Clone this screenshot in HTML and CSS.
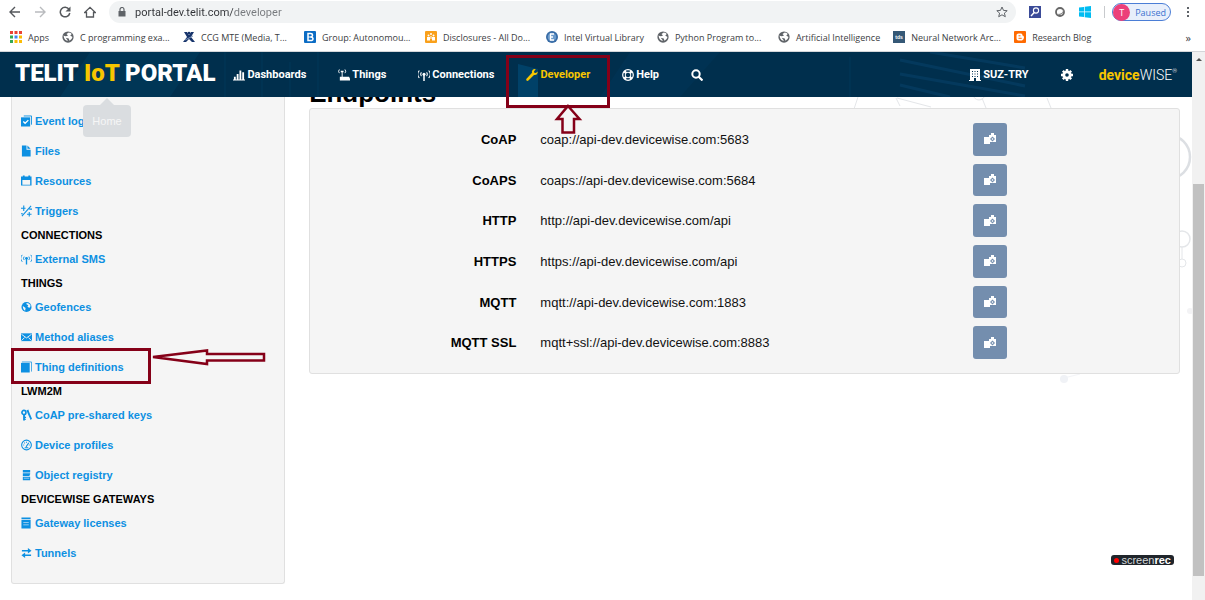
FILE: index.html
```html
<!DOCTYPE html>
<html lang="en">
<head>
<meta charset="utf-8">
<title>Telit IoT Portal - Developer</title>
<link rel="stylesheet" href="styles.css">
</head>
<body>
<svg class="defs" aria-hidden="true">
  <symbol id="globe" viewBox="0 0 16 16"><circle cx="8" cy="8" r="7.5" fill="#5f6368"/><path d="M2 6 Q5 8 8 6 L6 4 L9 2 Q12 2 13 4 L11 6 L14 8 Q13 12 10 13 L9 10 L5 9 L8 13 Q3 13 2 6Z" fill="#fff"/></symbol>
  <symbol id="signal" viewBox="1 -1 16 16"><path d="M5.6 3.5a4 4 0 0 0 0 5M12.4 3.5a4 4 0 0 1 0 5M2.8 1a7.5 7.5 0 0 0 0 10M15.2 1a7.5 7.5 0 0 1 0 10" fill="none" stroke="currentColor" stroke-width="1.4"/><circle cx="9" cy="6" r="2" fill="currentColor"/><path d="M8 6h2v9H8z" fill="currentColor"/></symbol>
  <symbol id="copy" viewBox="0 0 14 14"><path d="M1 5h6v7H1zM6 3h2V1h3v2h2v7H7V5H6z" fill="#fff"/><path d="M9.500 4.500L12 7 9.500 9.500 7 7z" fill="#748eae"/><path d="M9.500 6l1 1-1 1-1-1z" fill="#fff"/></symbol>
</svg>

<header class="browser">
  <div class="toolbar">
    <button class="tool" aria-label="Back"><svg viewBox="0 0 12 12"><path d="M11 6H1.500M6 1L1 6l5 5" fill="none" stroke="#55585c" stroke-width="1.4"/></svg></button>
    <button class="tool" aria-label="Forward"><svg viewBox="0 0 12 12"><path d="M1 6h9.500M6 1l5 5-5 5" fill="none" stroke="#b9bbbe" stroke-width="1.4"/></svg></button>
    <button class="tool" aria-label="Reload"><svg viewBox="0 0 12 12"><path d="M10 3.200A4.800 4.800 0 1 0 10.800 7" fill="none" stroke="#55585c" stroke-width="1.500"/><path d="M11.500 0.500v5h-5z" fill="#55585c"/></svg></button>
    <button class="tool" aria-label="Home"><svg viewBox="0 0 12 12"><path d="M0.700 6.500L6 1.300l5.300 5.200H9.500V11h-7V6.500z" fill="none" stroke="#55585c" stroke-width="1.300"/></svg></button>
    <div class="omnibox">
      <svg class="lock" viewBox="0 0 8 10"><path d="M0.500 4h7v5.500h-7z" fill="#5f6368"/><path d="M2 4V2.500a2 2 0 0 1 4 0V4" fill="none" stroke="#5f6368" stroke-width="1.200"/></svg>
      <input class="address" type="text" aria-label="Address" value="portal-dev.telit.com/developer">
      <button class="tool" aria-label="Bookmark this page"><svg viewBox="0 0 12 12"><path d="M6 1l1.500 3.400 3.700.300-2.800 2.400.900 3.600L6 8.800l-3.300 1.900.900-3.600L.800 4.700l3.700-.300z" fill="none" stroke="#5f6368"/></svg></button>
    </div>
    <button class="tool" aria-label="Search extension"><svg viewBox="0 0 12 12"><path d="M0 0h12v12H0z" fill="#3b4b98"/><circle cx="7" cy="4.500" r="2.600" fill="none" stroke="#fff" stroke-width="1.100"/><path d="M5.200 6.500L2 10" stroke="#fff" stroke-width="1.400"/></svg></button>
    <button class="tool" aria-label="Sphere extension"><svg viewBox="0 0 12 12"><circle cx="6" cy="6" r="4" fill="#fff" stroke="#666" stroke-width="1.800"/><path d="M3 8a4 4 0 0 0 6-5q1 5-6 5z" fill="#888"/></svg></button>
    <button class="tool" aria-label="Windows extension"><svg viewBox="0 0 12 12"><path d="M0 1.500l5-.600v4.700H0zM5.700.800L12 0v5.600H5.700zM0 6.300h5v4.800l-5-.600zM5.700 6.300H12V12l-6.300-.800z" fill="#00bcf2"/></svg></button>
    <span class="divider"></span>
    <button class="profile"><span class="avatar">T</span>Paused</button>
    <button class="tool menu" aria-label="Menu"><svg viewBox="0 0 12 12"><path d="M5 1h2v2H5zM5 5h2v2H5zM5 9h2v2H5z" fill="#5f6368"/></svg></button>
  </div>
  <nav class="bookmarks" aria-label="Bookmarks">
    <a href="#"><svg viewBox="0 0 12 12"><path d="M0 0h3v3H0zM4.500 0h3v3h-3zM9 0h3v3H9z" fill="#ea4335"/><path d="M0 4.500h3v3H0z" fill="#34a853"/><path d="M4.500 4.500h3v3h-3z" fill="#4285f4"/><path d="M9 4.500h3v3H9zM4.500 9h3v3h-3zM9 9h3v3H9z" fill="#fbbc05"/><path d="M0 9h3v3H0z" fill="#34a853"/></svg><span>Apps</span></a>
    <a href="#" class="cut"><svg><use href="#globe"/></svg><span>C programming exa...</span></a>
    <a href="#" class="cut"><svg viewBox="0 0 12 12"><path d="M1 1l3 0 2 3 2-3h3L8 6l4 5H9L6 8l-3 3H0l4-5z" fill="#17346b"/><circle cx="6" cy="2" r="1.300" fill="#17346b"/><path d="M2 9l8-4" stroke="#7d95b8"/></svg><span>CCG MTE (Media, T...</span></a>
    <a href="#" class="cut"><svg viewBox="0 0 12 12"><rect width="12" height="12" rx="1" fill="#0b6cc4"/><path d="M4 2.500h2.500q2 0 2 1.700T6.500 6q2.500 0 2.500 1.800T6.500 9.500H4z" fill="none" stroke="#fff" stroke-width="1.500"/><path d="M4 6h3" stroke="#fff"/></svg><span>Group: Autonomou...</span></a>
    <a href="#" class="cut"><svg viewBox="0 0 12 12"><rect width="12" height="12" rx="1" fill="#f9a01b"/><g fill="#fff"><circle cx="3.500" cy="4.500" r="1"/><circle cx="8.500" cy="4.500" r="1"/><circle cx="6" cy="3" r="1"/><path d="M2 6h3v3.500H2zM7 6h3v3.500H7zM5.500 5h1v3h-1z"/></g></svg><span>Disclosures - All Do...</span></a>
    <a href="#"><svg viewBox="0 0 12 12"><circle cx="6" cy="6" r="6" fill="#376ba5"/><circle cx="6" cy="6" r="4.300" fill="#6c9bcb"/><path d="M8 3H4.500v6H8M4.500 6H7" fill="none" stroke="#fff" stroke-width="1.300"/></svg><span>Intel Virtual Library</span></a>
    <a href="#" class="cut"><svg><use href="#globe"/></svg><span>Python Program to...</span></a>
    <a href="#"><svg><use href="#globe"/></svg><span>Artificial Intelligence</span></a>
    <a href="#" class="cut"><svg viewBox="0 0 12 12"><path d="M0 0h12v12H0z" fill="#355876"/><text x="6" y="8" text-anchor="middle" class="tds">tds</text></svg><span>Neural Network Arc...</span></a>
    <a href="#"><svg viewBox="0 0 12 12"><rect width="12" height="12" rx="1" fill="#ff6a00"/><path d="M4.500 2.500H7q1.500 0 1.500 2 1.500 0 1.500 2T8 9.500H4.500q-2 0-2-2v-3q0-2 2-2z" fill="#fff"/><path d="M4.500 4.800h2M4.500 7.300h3.200" stroke="#ff6a00"/></svg><span>Research Blog</span></a>
    <button class="more" aria-label="More bookmarks">»</button>
  </nav>
</header>

<div class="viewport">
  <div class="page">
    <header class="topbar">
      <svg class="texture" viewBox="0 0 1192 45" preserveAspectRatio="none" aria-hidden="true">
        <path d="M90 0h110l-30 45H60z" fill="#004a75" opacity=".25"/>
        <path d="M518 12l20 5v28h-20z" fill="#00507f" opacity=".55"/>
        <path d="M600 45l30-45h90l-40 45z" fill="#004a75" opacity=".14"/>
        <path d="M900 8l125 26M900 22l125 22M930 0l95 16M900 33l50 12" stroke="#0a4a75" stroke-width="3" opacity=".4"/>
        <path d="M225 0v45M262 0v45M290 10v35M318 0v45M850 5v40" stroke="#004a75" opacity=".3"/>
      </svg>
      <a href="#" class="brand">TELIT <b>IoT</b> PORTAL</a>
      <nav class="mainnav" aria-label="Main">
        <a href="#"><svg viewBox="0 0 13 12"><path d="M0 11h13v1H0zM1 8h2v3H1zM4 5h2v6H4zM7 1h2v10H7zM10 3h2v8h-2z" fill="currentColor"/></svg>Dashboards</a>
        <a href="#"><svg viewBox="0 0 13 12"><path d="M1.500 0a3 3 0 0 0 0 4M7.500 0a3 3 0 0 1 0 4" fill="none" stroke="currentColor"/><path d="M4 2h1v6H4zM3 1.500h3v1.500H3zM2 8h10l1 2v2H2z" fill="currentColor"/></svg>Things</a>
        <a href="#"><svg><use href="#signal"/></svg>Connections</a>
        <a href="#" class="active"><svg viewBox="0 0 12 12"><path d="M11.800 2.500L9.800 4 8.300 3.800 8 2.200 9.800.300Q7 -.500 6 2q-.300 1 .100 1.800L.500 9.800q-.800 1.400.600 2 .800.300 1.300-.300L8 6Q11.500 6.500 11.800 2.500z" fill="currentColor"/></svg>Developer</a>
        <a href="#"><svg viewBox="0 0 12 12"><circle cx="6" cy="6" r="5.300" fill="none" stroke="currentColor" stroke-width="1.200"/><circle cx="6" cy="6" r="2.800" fill="none" stroke="currentColor"/><path d="M2.200 2.200l2 2M9.800 2.200l-2 2M2.200 9.800l2-2M9.800 9.800l-2-2" stroke="currentColor" stroke-width="2.400"/></svg>Help</a>
        <a href="#" aria-label="Search"><svg viewBox="0 0 12 12"><circle cx="5" cy="5" r="3.700" fill="none" stroke="currentColor" stroke-width="2"/><path d="M7.500 7.500l4 4" stroke="currentColor" stroke-width="2.200"/></svg></a>
      </nav>
      <nav class="account" aria-label="Account">
        <a href="#"><svg viewBox="0 0 12 12"><path fill-rule="evenodd" d="M1 0h10v11h1v1H7V9H5v3H0v-1h1zM3 2v1h1V2zM5.500 2v1h1V2zM8 2v1h1V2zM3 4.500v1h1v-1zM5.500 4.500v1h1v-1zM8 4.500v1h1v-1zM3 7v1h1V7zM5.500 7v1h1V7zM8 7v1h1V7z" fill="currentColor"/></svg>SUZ-TRY</a>
        <a href="#" aria-label="Settings"><svg viewBox="0 0 12 12"><circle cx="6" cy="6" r="3.200" fill="none" stroke="currentColor" stroke-width="2.800"/><path d="M6 0v2M6 10v2M0 6h2M10 6h2M1.800 1.800l1.400 1.400M8.800 8.800l1.400 1.400M1.800 10.200l1.400-1.400M8.800 3.200l1.400-1.400" stroke="currentColor" stroke-width="2.400"/></svg></a>
        <a href="#" class="dw"><b>device</b>WISE<sup>®</sup></a>
      </nav>
    </header>

    <div class="content">
      <svg class="network" viewBox="0 0 360 300" aria-hidden="true">
        <g fill="none" stroke="#e4e6e9"><path d="M26 0l-4 12M65 1l34 9M150 1l4 10M215 1l4 10M64 1l4 8" /><circle cx="147" cy="-3" r="6"/><circle cx="336" cy="60" r="22" stroke="#dcdfe3" stroke-width="2.500"/><circle cx="350" cy="142" r="8" stroke-width="1.500"/><circle cx="350" cy="166" r="4"/><path d="M350 150v12M347 130v4"/><path d="M232 281l16-4" stroke="#f3f4f7"/></g>
        <circle cx="232" cy="282" r="4" fill="#f0f2f6"/><circle cx="358" cy="214" r="3" fill="#f3f3f5"/>
      </svg>
      <aside class="sidebar">
        <a href="#"><svg viewBox="0 0 12 12"><path d="M3 .500h8.500V10" fill="none" stroke="currentColor"/><path d="M0 2h10v10H0z" fill="currentColor"/><path d="M2.500 6.500l2 2 3.500-3.500" fill="none" stroke="#fff" stroke-width="1.400"/></svg>Event log</a>
        <a href="#"><svg viewBox="0 0 12 12"><path d="M1 0h5v4.500h4.500V12H1zM7 0l3.500 3.500H7z" fill="currentColor"/></svg>Files</a>
        <a href="#"><svg viewBox="0 0 12 12"><path fill-rule="evenodd" d="M0 1h2V0h2v1h4V0h2v1h1.500v10H0zM1.500 5v5H10V5z" fill="currentColor"/></svg>Resources</a>
        <a href="#"><svg viewBox="0 0 12 12"><path d="M1 11.500L11 .500M3 0v6M0 3h5M9 7v5M6.500 9.500h5M9 4h3M0 9h2" fill="none" stroke="currentColor" stroke-width="1.200"/></svg>Triggers</a>
        <h2>CONNECTIONS</h2>
        <a href="#"><svg><use href="#signal"/></svg>External SMS</a>
        <h2>THINGS</h2>
        <a href="#"><svg viewBox="0 0 12 12"><circle cx="6" cy="6" r="5.500" fill="currentColor"/><path d="M6 1.500Q10 2 10.500 5L9 7 7 5.500 8 4 6 3zM2 5l3 2-.500 3Q2 9 2 5z" fill="#f5f5f5"/></svg>Geofences</a>
        <a href="#"><svg viewBox="0 0 12 12"><path d="M0 2h12v8.500H0z" fill="currentColor"/><path d="M.500 3L6 7l5.500-4M.500 10L4 6.500M11.500 10L8 6.500" fill="none" stroke="#f5f5f5"/></svg>Method aliases</a>
        <a href="#"><svg viewBox="0 0 12 12"><path d="M0 1.500h9.500V12H0z" fill="currentColor"/><path d="M1 .500h10.500V11" fill="none" stroke="currentColor" stroke-width=".8"/></svg>Thing definitions</a>
        <h2>LWM2M</h2>
        <a href="#"><svg viewBox="0 0 12 12"><circle cx="3.200" cy="3.200" r="2.200" fill="none" stroke="currentColor" stroke-width="1.800"/><path d="M2.300 5h2v7h-2zM4 8h1.500v1.200H4zM4 10h1.500v1.200H4zM6 1l2-1 1 3 3 7-1.500 1.500L8 6z" fill="currentColor"/></svg>CoAP pre-shared keys</a>
        <a href="#"><svg viewBox="0 0 12 12"><circle cx="6" cy="6" r="5.300" fill="none" stroke="currentColor" stroke-width="1.200"/><path d="M5.500 8L8.500 3.500M2.500 6h1M3.500 3.500l.700.700M6 2.500v1M8.500 6h1M4 9h4" stroke="currentColor" stroke-width="1.200"/></svg>Device profiles</a>
        <a href="#"><svg viewBox="0 0 12 12"><path d="M2 .500h8v2.800H2zM2 4.200h8v1L9 6.500 10 7H2zM2 8h8v3.800H2z" fill="currentColor"/><path d="M3 9.500h6" stroke="#9fd0f2"/></svg>Object registry</a>
        <h2>DEVICEWISE GATEWAYS</h2>
        <a href="#"><svg viewBox="0 0 12 12"><path d="M.500 0h10v1.500h-10zM.500 2.500h10V12h-10z" fill="currentColor"/><path d="M2.500 5.500h6M2.500 8h6" stroke="#9fd0f2"/></svg>Gateway licenses</a>
        <a href="#"><svg viewBox="0 0 12 12"><path d="M1 3.500h7M4 8.500h7" stroke="currentColor" stroke-width="1.600"/><path d="M7.500 .500L11.500 3.500l-4 3zM4.500 5.500L.500 8.500l4 3z" fill="currentColor"/></svg>Tunnels</a>
      </aside>
      <main class="endpoints">
        <h1>Endpoints</h1>
        <section class="panel">
          <div class="row"><strong>CoAP</strong><span>coap://api-dev.devicewise.com:5683</span><button aria-label="Copy CoAP"><svg><use href="#copy"/></svg></button></div>
          <div class="row"><strong>CoAPS</strong><span>coaps://api-dev.devicewise.com:5684</span><button aria-label="Copy CoAPS"><svg><use href="#copy"/></svg></button></div>
          <div class="row"><strong>HTTP</strong><span>http://api-dev.devicewise.com/api</span><button aria-label="Copy HTTP"><svg><use href="#copy"/></svg></button></div>
          <div class="row"><strong>HTTPS</strong><span>https://api-dev.devicewise.com/api</span><button aria-label="Copy HTTPS"><svg><use href="#copy"/></svg></button></div>
          <div class="row"><strong>MQTT</strong><span>mqtt://api-dev.devicewise.com:1883</span><button aria-label="Copy MQTT"><svg><use href="#copy"/></svg></button></div>
          <div class="row"><strong>MQTT SSL</strong><span>mqtt+ssl://api-dev.devicewise.com:8883</span><button aria-label="Copy MQTT SSL"><svg><use href="#copy"/></svg></button></div>
        </section>
      </main>
      <div class="tooltip" role="tooltip">Home</div>
      <div class="screenrec"><i></i><span>screen<b>rec</b></span></div>
    </div>
  </div>
  <div class="scrollbar" aria-hidden="true"><span class="up"></span><span class="thumb"></span></div>
</div>

<svg class="marks" width="1205" height="600" aria-hidden="true">
  <g fill="none" stroke="#850018" stroke-width="3">
    <path d="M507.500 56.500h101v50h-101z"/>
    <path d="M12.500 349.500h137v33h-137z"/>
    <path d="M568 106l11.500 13H574v13.500h-11.500V119H557z" stroke-width="2.500"/>
    <path d="M153 357l54-6.500v3.500h57v6.500h-57v3.500z" stroke-width="2.500"/>
  </g>
</svg>
</body>
</html>
```
FILE: styles.css
```css
* { box-sizing: border-box; }
body {
  margin: 0;
  height: 100vh;
  display: flex;
  flex-direction: column;
  overflow: hidden;
  position: relative;
  background: #fff;
  font-family: "Liberation Sans", Arial, sans-serif;
}
a { text-decoration: none; color: inherit; }
button { border: 0; padding: 0; background: none; font: inherit; color: inherit; }
svg { display: block; flex: none; }
.defs { position: absolute; width: 0; height: 0; }

/* browser chrome */
.browser { border-bottom: 1px solid #d4d6d9; font-family: "Open Sans", "Noto Sans", sans-serif; }
.toolbar { display: flex; align-items: center; gap: 13px; height: 24px; padding: 0 11px 0 9px; }
.tool svg { width: 12px; height: 12px; }
.omnibox {
  flex: 1;
  display: flex;
  align-items: center;
  gap: 9px;
  height: 22px;
  padding: 0 8px 0 9px;
  border-radius: 11px;
  background: #f1f3f4;
}
.lock { width: 8px; height: 10px; }
.address {
  flex: 1;
  min-width: 0;
  padding: 0;
  border: 0;
  outline: 0;
  background: linear-gradient(90deg, #303236 98px, #76797d 98px);
  -webkit-background-clip: text;
  background-clip: text;
  -webkit-text-fill-color: transparent;
  font: 11px Roboto, "Noto Sans", sans-serif;
}
.divider { width: 1px; height: 12px; background: #c8cacd; }
.profile {
  display: flex;
  align-items: center;
  gap: 5px;
  height: 18px;
  padding-right: 4px;
  margin: 0 -2px 0 -6px;
  border: 1px solid #4b7ed6;
  border-radius: 9px;
  background: #e8effb;
  color: #3a72d0;
  font-size: 9px;
}
.avatar { width: 17px; line-height: 17px; border-radius: 50%; background: #ec407a; color: #fff; text-align: center; }
.bookmarks { display: flex; align-items: center; gap: 13px; height: 26px; padding: 0 14px 0 10px; font-size: 9px; color: #3c4043; }
.browser { padding-bottom: 1px; }
.bookmarks a { display: flex; align-items: center; gap: 6px; white-space: nowrap; }
.bookmarks .cut span { min-width: 90px; }
.bookmarks svg { width: 12px; height: 12px; }
.tds { font: bold 5px "Liberation Sans", sans-serif; fill: #fff; }
.more { margin-left: auto; font-size: 11px; }

/* portal */
.viewport { flex: 1; min-height: 0; display: flex; }
.page { flex: 1; min-width: 0; display: flex; flex-direction: column; }
.topbar {
  position: relative;
  z-index: 1;
  flex: none;
  display: flex;
  align-items: center;
  height: 45px;
  padding: 0 15px;
  background: #002f4d;
  color: #fff;
  font: bold 11px Roboto, sans-serif;
}
.texture { position: absolute; inset: 0; width: 100%; height: 100%; }
.brand { position: relative; margin: 0 18px 4px 0; font-size: 24px; font-weight: 900; white-space: nowrap; }
.brand b, .active { color: #f7c600; }
.mainnav, .account { position: relative; display: flex; align-items: center; gap: 32px; }
.mainnav a, .account a { display: flex; align-items: center; gap: 2px; white-space: nowrap; }
.mainnav svg, .account svg { width: 12px; height: 12px; }
.account { margin-left: auto; }
.account .dw { margin-left: -6px; font-size: 14px; font-weight: 300; gap: 0; }
.dw b { color: #f7c600; font-weight: 700; }
.dw sup { font-size: 6px; align-self: flex-start; }
.content {
  position: relative;
  flex: 1;
  min-height: 0;
  overflow: hidden;
  display: flex;
  align-items: flex-start;
  gap: 24px;
  padding: 0 12px 0 11px;
}
.network { position: absolute; top: 0; right: 0; width: 360px; height: 300px; }
.sidebar {
  flex: 0 0 23.45%;
  padding: 9px 9px 15px;
  border: 1px solid #e0e0e0;
  border-top: 0;
  border-radius: 0 0 3px 3px;
  background: #f5f5f5;
  font-size: 11px;
  font-weight: bold;
}
.sidebar a { display: flex; align-items: center; gap: 3px; height: 30px; color: #0d90e2; }
.sidebar svg { width: 11px; height: 12px; }
.sidebar h2 { margin: 0; font-size: 11px; line-height: 18px; }
.endpoints { position: relative; flex: 1; min-width: 0; margin-top: -19px; }
h1 { margin: 0; font-size: 26px; line-height: 30px; }
.panel {
  display: flex;
  flex-direction: column;
  gap: 8px;
  min-height: 266px;
  padding: 14px 0;
  border: 1px solid #e0e0e0;
  border-radius: 3px;
  background: #f5f5f5;
}
.row {
  flex: 1;
  display: grid;
  grid-template-columns: 206fr 408fr 206fr;
  gap: 24px;
  align-items: center;
  font-size: 13px;
  color: #111;
}
.row strong { text-align: right; color: #000; }
.row button {
  justify-self: start;
  align-self: stretch;
  display: grid;
  place-items: center;
  width: 34px;
  border-radius: 3px;
  background: #748eae;
}
.row button svg { width: 14px; height: 14px; }
.tooltip {
  position: absolute;
  top: 8px;
  left: 83px;
  width: 48px;
  line-height: 32px;
  border-radius: 4px;
  background: #dadde0;
  color: #f6f6f6;
  font-size: 11px;
  text-align: center;
}
.tooltip::before {
  content: "";
  position: absolute;
  left: 17px;
  top: -7px;
  border: 7px solid transparent;
  border-top: 0;
  border-bottom-color: #dadde0;
}
.screenrec {
  position: absolute;
  right: 18px;
  bottom: 35px;
  display: flex;
  align-items: center;
  gap: 2px;
  height: 10px;
  padding: 0 3px;
  border-radius: 3px;
  background: #20252b;
  color: #d5d8da;
  font-size: 11px;
  line-height: 10px;
}
.screenrec i { width: 5px; height: 5px; border-radius: 50%; background: #f00; }
.screenrec b { color: #fff; }
.scrollbar { position: relative; width: 13px; background: #f1f1f1; }
.up { position: absolute; left: 4px; top: 6px; border: 3px solid transparent; border-top: 0; border-bottom-color: #505050; }
.thumb { position: absolute; left: 1px; right: 1px; top: 24%; bottom: 24px; background: #c1c1c1; }
.marks { position: absolute; left: 0; top: 0; z-index: 2; pointer-events: none; }
```
